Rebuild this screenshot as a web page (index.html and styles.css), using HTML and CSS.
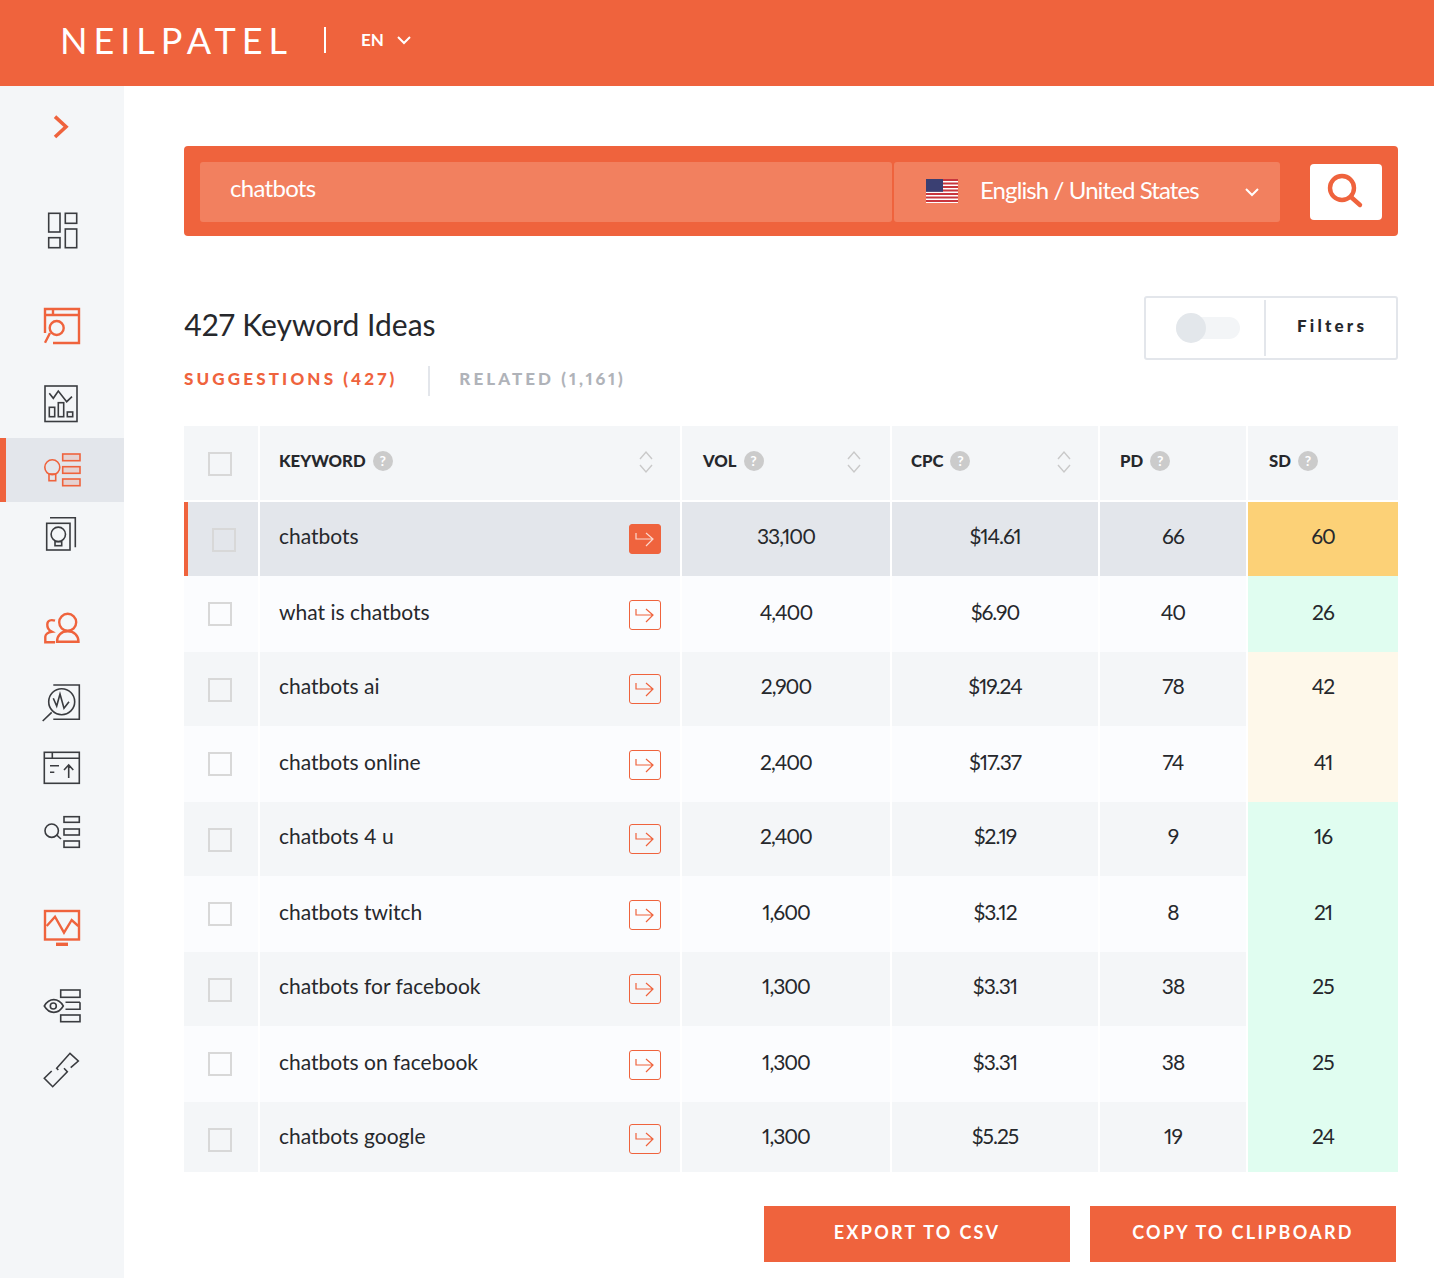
FILE: index.html
```html
<!DOCTYPE html>
<html lang="en">
<head>
    <meta charset="UTF-8">
    <title>Keyword Ideas</title>
    <link rel="stylesheet" href="styles.css">
</head>
<body>
    <svg class="defs" width="0" height="0">
        <symbol id="go" viewBox="0 0 32 30"><path d="M7 9v6h17M17 9l7 6-7 7"/></symbol>
        <symbol id="sort" viewBox="0 0 14 24"><path d="M1 9l6-7 6 7M1 15l6 7 6-7"/></symbol>
    </svg>
    <header class="topbar">
        <div class="logo">NEILPATEL</div>
        <span class="topbar-line"></span>
        <span class="lang">EN</span>
        <svg class="lang-arrow" width="14" height="10" viewBox="0 0 14 10"><path d="M1 2l6 6 6-6"/></svg>
    </header>
    <div class="page">
        <nav class="sidebar">
            <a class="nav-item"><svg class="ico orange heavy" viewBox="0 0 40 40"><path d="M13 9.700l11 10-11 10.300"/></svg></a>
            <a class="nav-item"><svg class="ico" viewBox="0 0 40 40"><rect x="6.700" y="3.300" width="11.300" height="18.700"/><rect x="23.300" y="3.300" width="11.400" height="10"/><rect x="6.700" y="27.700" width="11.300" height="10"/><rect x="23.300" y="19" width="11.400" height="18.700"/></svg></a>
            <a class="nav-item"><svg class="ico orange heavy2" viewBox="0 0 40 40"><path d="M3 27V3h34v34H11M3 9h34M11 3v6M8 27l-5 9.700"/><circle cx="14.700" cy="22" r="7"/></svg></a>
            <a class="nav-item"><svg class="ico" viewBox="0 0 40 40"><rect x="3" y="2" width="32" height="35.500"/><path d="M7.300 9.300l4 5 5-7.300 8.400 10.700 5.300-5"/><rect x="7.300" y="23.300" width="5.400" height="9.400"/><rect x="16.300" y="18.700" width="5.400" height="14"/><rect x="25.300" y="28" width="5.400" height="4.700"/></svg></a>
            <a class="nav-item active"><svg class="ico orange" viewBox="0 0 40 40"><circle cx="10.300" cy="17.300" r="7.500"/><rect x="7" y="24" width="6.700" height="6.700"/><rect class="soft" x="20.700" y="4" width="17.300" height="6.700"/><rect class="soft" x="20.700" y="16.700" width="17.300" height="6.600"/><rect class="soft" x="20.700" y="29" width="17.300" height="6.700"/></svg></a>
            <a class="nav-item"><svg class="ico" viewBox="0 0 40 40"><rect x="4.700" y="9.300" width="23.300" height="26.700"/><path d="M8 3.700h25.300v29.600"/><circle cx="16.300" cy="20.300" r="7.200"/><rect x="13" y="27.700" width="6.700" height="4"/></svg></a>
            <a class="nav-item"><svg class="ico orange heavy2" viewBox="0 0 40 40"><circle cx="25.700" cy="15.300" r="8.500"/><path d="M15 34.800c0-6.500 4.500-10.500 10.700-10.500S36.500 28.300 36.500 34.800zM13 13.700c-4-1.200-7.500-.5-7.700 3.500-.2 3.500 1.700 6.200 4.400 7.500-4 .5-6.400 3-6.400 5v5.500H13"/></svg></a>
            <a class="nav-item"><svg class="ico" viewBox="0 0 40 40"><path d="M11.300 2h26v34.300h-26M9.700 29.300L.7 38M11.300 15.300l3.400 7.700L18 11l4 14.300 5-6.600"/><circle cx="19.700" cy="18.700" r="13"/></svg></a>
            <a class="nav-item"><svg class="ico" viewBox="0 0 40 40"><rect x="2.300" y="4.300" width="35" height="31"/><path d="M2.300 10.300h35M10.300 4.300v6M8 17.700h9M8 24.300h4.300M26.700 30V17M22 22l4.700-5 4.600 5"/></svg></a>
            <a class="nav-item"><svg class="ico" viewBox="0 0 40 40"><circle cx="9.700" cy="18.700" r="6.700"/><path d="M14.700 23l4.300 4"/><rect x="22" y="4.700" width="15.300" height="5.600"/><rect x="22" y="17" width="15.300" height="6"/><rect x="22" y="29" width="15.300" height="6.300"/></svg></a>
            <a class="nav-item"><svg class="ico orange heavy2" viewBox="0 0 40 40"><rect x="3" y="3" width="34" height="28.500"/><path d="M4.700 18L13 8.700l9 16 7.700-12.700 6.600 6"/><path class="stand" d="M14 36.300h12"/></svg></a>
            <a class="nav-item"><svg class="ico" viewBox="0 0 40 40"><path d="M2.300 20c5-8.500 14-8.500 19 0-5 8.500-14 8.500-19 0zM38 16.300H23.500M23.500 23.300H38V16.300"/><circle cx="11.300" cy="20" r="3"/><rect x="18.700" y="4" width="19.300" height="7.300"/><rect x="18.700" y="29" width="19.300" height="6.700"/></svg></a>
            <a class="nav-item"><svg class="ico" viewBox="0 0 40 40"><path d="M16.300 20l-1.600-1.700L28 3.300l8.300 7.700-7.600 6.700M9.700 21l-7.400 7.300 8.400 8.400 14.600-15-3.300-3.400"/></svg></a>
        </nav>
        <main class="content">
            <div class="search">
                <div class="search-input">chatbots</div>
                <div class="search-select">
                    <svg class="flag" width="32" height="24" viewBox="0 0 32 24"><rect width="32" height="24" fill="#fff"/><path d="M0 1h32M0 4.500h32M0 8h32M0 11.500h32M0 15h32M0 18.500h32M0 22h32" stroke="#c8363e" stroke-width="1.800"/><rect width="17" height="12.800" fill="#3a3f72"/></svg>
                    <span class="select-text">English / United States</span>
                    <svg class="select-arrow" width="14" height="10" viewBox="0 0 14 10"><path d="M1 2l6 6 6-6"/></svg>
                </div>
                <button class="search-btn"><svg width="40" height="40" viewBox="0 0 40 40"><circle cx="16" cy="16" r="12"/><path d="M25 25l9 8"/></svg></button>
            </div>
            <div class="title-row">
                <div>
                    <h1 class="title">427 Keyword Ideas</h1>
                    <div class="tabs">
                        <span class="tab on">SUGGESTIONS (427)</span>
                        <span class="tab-line"></span>
                        <span class="tab">RELATED (1,161)</span>
                    </div>
                </div>
                <div class="filters">
                    <div class="toggle-wrap"><div class="toggle"><span class="knob"></span></div></div>
                    <div class="filters-text">Filters</div>
                </div>
            </div>
            <div class="grid">
                <div class="row head">
                    <div class="cell c-check"><span class="box"></span></div>
                    <div class="cell c-head"><span class="head-name">KEYWORD <i class="help">?</i></span><svg class="sort"><use href="#sort"/></svg></div>
                    <div class="cell c-head"><span class="head-name">VOL <i class="help">?</i></span><svg class="sort"><use href="#sort"/></svg></div>
                    <div class="cell c-head"><span class="head-name">CPC <i class="help">?</i></span><svg class="sort"><use href="#sort"/></svg></div>
                    <div class="cell c-head"><span class="head-name">PD <i class="help">?</i></span></div>
                    <div class="cell c-head"><span class="head-name">SD <i class="help">?</i></span></div>
                </div>
                <div class="row sel">
                    <div class="cell c-check"><span class="box"></span></div>
                    <div class="cell c-key"><span class="txt">chatbots</span><a class="go on"><svg><use href="#go"/></svg></a></div>
                    <div class="cell c-num"><span class="txt">33,100</span></div>
                    <div class="cell c-num"><span class="txt">$14.61</span></div>
                    <div class="cell c-num"><span class="txt">66</span></div>
                    <div class="cell c-num sd-hard"><span class="txt">60</span></div>
                </div>
                <div class="row light">
                    <div class="cell c-check"><span class="box"></span></div>
                    <div class="cell c-key"><span class="txt">what is chatbots</span><a class="go"><svg><use href="#go"/></svg></a></div>
                    <div class="cell c-num"><span class="txt">4,400</span></div>
                    <div class="cell c-num"><span class="txt">$6.90</span></div>
                    <div class="cell c-num"><span class="txt">40</span></div>
                    <div class="cell c-num sd-easy"><span class="txt">26</span></div>
                </div>
                <div class="row">
                    <div class="cell c-check"><span class="box"></span></div>
                    <div class="cell c-key"><span class="txt">chatbots ai</span><a class="go"><svg><use href="#go"/></svg></a></div>
                    <div class="cell c-num"><span class="txt">2,900</span></div>
                    <div class="cell c-num"><span class="txt">$19.24</span></div>
                    <div class="cell c-num"><span class="txt">78</span></div>
                    <div class="cell c-num sd-mid"><span class="txt">42</span></div>
                </div>
                <div class="row light">
                    <div class="cell c-check"><span class="box"></span></div>
                    <div class="cell c-key"><span class="txt">chatbots online</span><a class="go"><svg><use href="#go"/></svg></a></div>
                    <div class="cell c-num"><span class="txt">2,400</span></div>
                    <div class="cell c-num"><span class="txt">$17.37</span></div>
                    <div class="cell c-num"><span class="txt">74</span></div>
                    <div class="cell c-num sd-mid"><span class="txt">41</span></div>
                </div>
                <div class="row">
                    <div class="cell c-check"><span class="box"></span></div>
                    <div class="cell c-key"><span class="txt">chatbots 4 u</span><a class="go"><svg><use href="#go"/></svg></a></div>
                    <div class="cell c-num"><span class="txt">2,400</span></div>
                    <div class="cell c-num"><span class="txt">$2.19</span></div>
                    <div class="cell c-num"><span class="txt">9</span></div>
                    <div class="cell c-num sd-easy"><span class="txt">16</span></div>
                </div>
                <div class="row light">
                    <div class="cell c-check"><span class="box"></span></div>
                    <div class="cell c-key"><span class="txt">chatbots twitch</span><a class="go"><svg><use href="#go"/></svg></a></div>
                    <div class="cell c-num"><span class="txt">1,600</span></div>
                    <div class="cell c-num"><span class="txt">$3.12</span></div>
                    <div class="cell c-num"><span class="txt">8</span></div>
                    <div class="cell c-num sd-easy"><span class="txt">21</span></div>
                </div>
                <div class="row">
                    <div class="cell c-check"><span class="box"></span></div>
                    <div class="cell c-key"><span class="txt">chatbots for facebook</span><a class="go"><svg><use href="#go"/></svg></a></div>
                    <div class="cell c-num"><span class="txt">1,300</span></div>
                    <div class="cell c-num"><span class="txt">$3.31</span></div>
                    <div class="cell c-num"><span class="txt">38</span></div>
                    <div class="cell c-num sd-easy"><span class="txt">25</span></div>
                </div>
                <div class="row light">
                    <div class="cell c-check"><span class="box"></span></div>
                    <div class="cell c-key"><span class="txt">chatbots on facebook</span><a class="go"><svg><use href="#go"/></svg></a></div>
                    <div class="cell c-num"><span class="txt">1,300</span></div>
                    <div class="cell c-num"><span class="txt">$3.31</span></div>
                    <div class="cell c-num"><span class="txt">38</span></div>
                    <div class="cell c-num sd-easy"><span class="txt">25</span></div>
                </div>
                <div class="row last">
                    <div class="cell c-check"><span class="box"></span></div>
                    <div class="cell c-key"><span class="txt">chatbots google</span><a class="go"><svg><use href="#go"/></svg></a></div>
                    <div class="cell c-num"><span class="txt">1,300</span></div>
                    <div class="cell c-num"><span class="txt">$5.25</span></div>
                    <div class="cell c-num"><span class="txt">19</span></div>
                    <div class="cell c-num sd-easy"><span class="txt">24</span></div>
                </div>
            </div>
            <div class="actions">
                <button class="action">EXPORT TO CSV</button>
                <button class="action">COPY TO CLIPBOARD</button>
            </div>
        </main>
    </div>
</body>
</html>
```

FILE: styles.css
```css
html,body{
    margin: 0;
    padding: 0;
    height: 1278px;
    overflow: hidden;
}
body{
    font-family: "Lato", "Liberation Sans", sans-serif;
    font-variant-numeric: proportional-nums;
    color: #26282c;
    background: #fff;
}
.defs{
    position: absolute;
}
.topbar{
    height: 86px;
    background: #ef633d;
    display: flex;
    align-items: center;
    color: #fff;
}
.logo{
    margin-left: 60px;
    width: 229px;
    font-size: 36px;
    line-height: 36px;
    letter-spacing: 6px;
    white-space: nowrap;
    position: relative;
    top: -3px;
}
.topbar-line{
    width: 2px;
    height: 26px;
    margin-left: 35px;
    background: #fff;
    position: relative;
    top: -3px;
}
.lang{
    margin-left: 35px;
    font-size: 17px;
    font-weight: 700;
    position: relative;
    top: -4px;
}
.lang-arrow{
    margin-left: 13px;
    position: relative;
    top: -3px;
}
.lang-arrow path,.select-arrow path{
    fill: none;
    stroke: #fff;
    stroke-width: 2;
}
.page{
    display: flex;
    height: 1192px;
}
.sidebar{
    width: 124px;
    flex: none;
    padding-top: 9px;
    background: #f4f6f8;
}
.nav-item{
    display: flex;
    height: 64px;
    align-items: center;
    justify-content: center;
}
.nav-item:nth-child(2){margin-top: 39px;}
.nav-item:nth-child(3){margin-top: 32px;}
.nav-item:nth-child(4){margin-top: 14px;}
.nav-item:nth-child(5){margin-top: 2px;}
.nav-item:nth-child(7){margin-top: 29px;}
.nav-item:nth-child(8){margin-top: 12px;}
.nav-item:nth-child(9){margin-top: 1px;}
.nav-item:nth-child(11){margin-top: 32px;}
.nav-item:nth-child(12){margin-top: 14px;}
.active{
    background: #e3e6eb;
    box-shadow: inset 6px 0 0 #ef633d;
}
.ico{
    width: 40px;
    height: 40px;
    fill: none;
    stroke: #3a3c40;
    stroke-width: 1.6;
}
.orange{
    stroke: #ef633d;
}
.heavy{
    stroke-width: 3.6;
}
.heavy2{
    stroke-width: 2.4;
}
.soft{
    fill: rgba(242,101,63,.15);
}
.stand{
    stroke-width: 3.4;
}
.content{
    flex: 1;
    padding: 60px 36px 0 60px;
}
.search{
    height: 90px;
    box-sizing: border-box;
    padding: 16px 16px 14px;
    background: #ef633d;
    border-radius: 4px;
    display: flex;
    color: #fff;
}
.search-input{
    width: 662px;
    padding-left: 30px;
    font-size: 24px;
    line-height: 52px;
    letter-spacing: -.7px;
    background: #f2805f;
    border-radius: 3px;
}
.search-select{
    width: 386px;
    margin-left: 2px;
    box-sizing: border-box;
    padding: 0 21px 0 32px;
    background: #f2805f;
    border-radius: 3px;
    display: flex;
    align-items: center;
    font-size: 24px;
    letter-spacing: -.9px;
}
.flag{
    margin-top: -2px;
}
.select-text{
    margin-left: 22px;
    margin-top: -6px;
}
.select-arrow{
    margin-left: auto;
}
.search-btn{
    width: 72px;
    height: 56px;
    margin: 2px 0 0 30px;
    padding: 0;
    border: none;
    border-radius: 4px;
    background: #fff;
    display: flex;
    align-items: center;
    justify-content: center;
}
.search-btn svg{
    fill: none;
    stroke: #ef633d;
    stroke-width: 4.4;
    stroke-linecap: round;
}
.title-row{
    display: flex;
    justify-content: space-between;
    margin-top: 60px;
    height: 130px;
}
.title{
    margin: 6px 0 0;
    font-size: 30px;
    line-height: 44px;
    font-weight: 400;
}
.tabs{
    display: flex;
    align-items: center;
    margin-top: 17px;
    font-size: 17px;
    font-weight: 900;
}
.tab{
    color: #b0b3b9;
    letter-spacing: 3.050px;
}
.tab.on{
    color: #ef633d;
    letter-spacing: 3.150px;
}
.tab-line{
    width: 2px;
    height: 30px;
    margin: 0 29px 0 31px;
    background: #e3e6eb;
    position: relative;
    top: 3px;
}
.filters{
    width: 254px;
    height: 64px;
    box-sizing: border-box;
    border: 2px solid #e3e6eb;
    border-radius: 3px;
    display: flex;
    align-items: center;
}
.toggle-wrap{
    width: 120px;
    height: 56px;
    box-sizing: border-box;
    padding-left: 30px;
    border-right: 2px solid #e3e6eb;
    display: flex;
    align-items: center;
}
.toggle{
    width: 64px;
    height: 22px;
    border-radius: 11px;
    background: #f3f5f7;
    position: relative;
}
.knob{
    position: absolute;
    left: 0;
    top: -4px;
    width: 30px;
    height: 30px;
    border-radius: 50%;
    background: #e3e7eb;
}
.filters-text{
    margin: -6px 0 0 31px;
    font-size: 17px;
    font-weight: 900;
    letter-spacing: 3.200px;
}
.row{
    display: grid;
    grid-template-columns: 74px 420px 208px 206px 146px 150px;
    column-gap: 2px;
    height: 74px;
}
.head{
    margin-bottom: 2px;
}
.light{
    height: 76px;
}
.cell{
    display: flex;
    align-items: center;
    background: #f4f6f8;
    min-width: 0;
}
.light .cell{
    background: #fbfcfe;
}
.sel .cell{
    background: #e3e6eb;
}
.c-check{
    padding-left: 24px;
}
.sel .c-check{
    border-left: 4px solid #ef633d;
}
.box{
    width: 24px;
    height: 24px;
    margin-top: 2px;
    box-sizing: border-box;
    border: 2px solid #d8d8d8;
}
.light .box{
    margin-top: 0;
}
.c-head{
    justify-content: space-between;
    padding: 0 27px 0 20px;
}
.c-head:nth-child(2),.c-head:nth-child(4){
    padding-left: 19px;
}
.c-head:nth-child(3){
    padding: 0 29px 0 21px;
}
.c-head:nth-child(6){
    padding-left: 21px;
}
.head-name{
    display: flex;
    align-items: center;
    font-size: 16.700px;
    font-weight: 900;
    margin-top: -4px;
    gap: 7px;
}
.help{
    width: 20px;
    height: 20px;
    border-radius: 50%;
    background: #cbcbcb;
    color: #fff;
    font-size: 14px;
    font-style: normal;
    font-weight: 700;
    line-height: 20px;
    text-align: center;
}
.sort{
    width: 14px;
    height: 24px;
    margin-top: -2px;
    fill: none;
    stroke: #c9c9c9;
    stroke-width: 1.4;
}
.c-key{
    justify-content: space-between;
    padding: 0 19px;
}
.c-num{
    justify-content: center;
}
.c-num .txt{
    letter-spacing: -1px;
}
.txt{
    font-size: 21px;
    margin-top: -8px;
}
.light .txt{
    margin-top: -6px;
}
.go{
    width: 32px;
    height: 30px;
    box-sizing: border-box;
    border: 1.500px solid #ef633d;
    border-radius: 3px;
    display: block;
}
.light .go{
    margin-top: 2px;
}
.go svg{
    display: block;
    width: 32px;
    height: 30px;
    margin: -1.500px;
    fill: none;
    stroke: #ef633d;
    stroke-width: 1.200;
}
.go.on{
    background: #ef633d;
}
.go.on svg{
    stroke: #fbd9cf;
}
.sel .sd-hard{
    background: #fcd177;
}
.row .sd-easy{
    background: #e0fdf0;
}
.row .sd-mid{
    background: #fef8ea;
}
.last{
    height: 70px;
}
.last .cell{
    padding-top: 4px;
}
.actions{
    display: flex;
    justify-content: flex-end;
    gap: 20px;
    margin: 34px 2px 0 0;
}
.action{
    width: 306px;
    height: 56px;
    padding: 0 0 4px;
    border: none;
    background: #ef633d;
    color: #fff;
    font-family: inherit;
    font-size: 18px;
    font-weight: 700;
    letter-spacing: 2.300px;
}
```
